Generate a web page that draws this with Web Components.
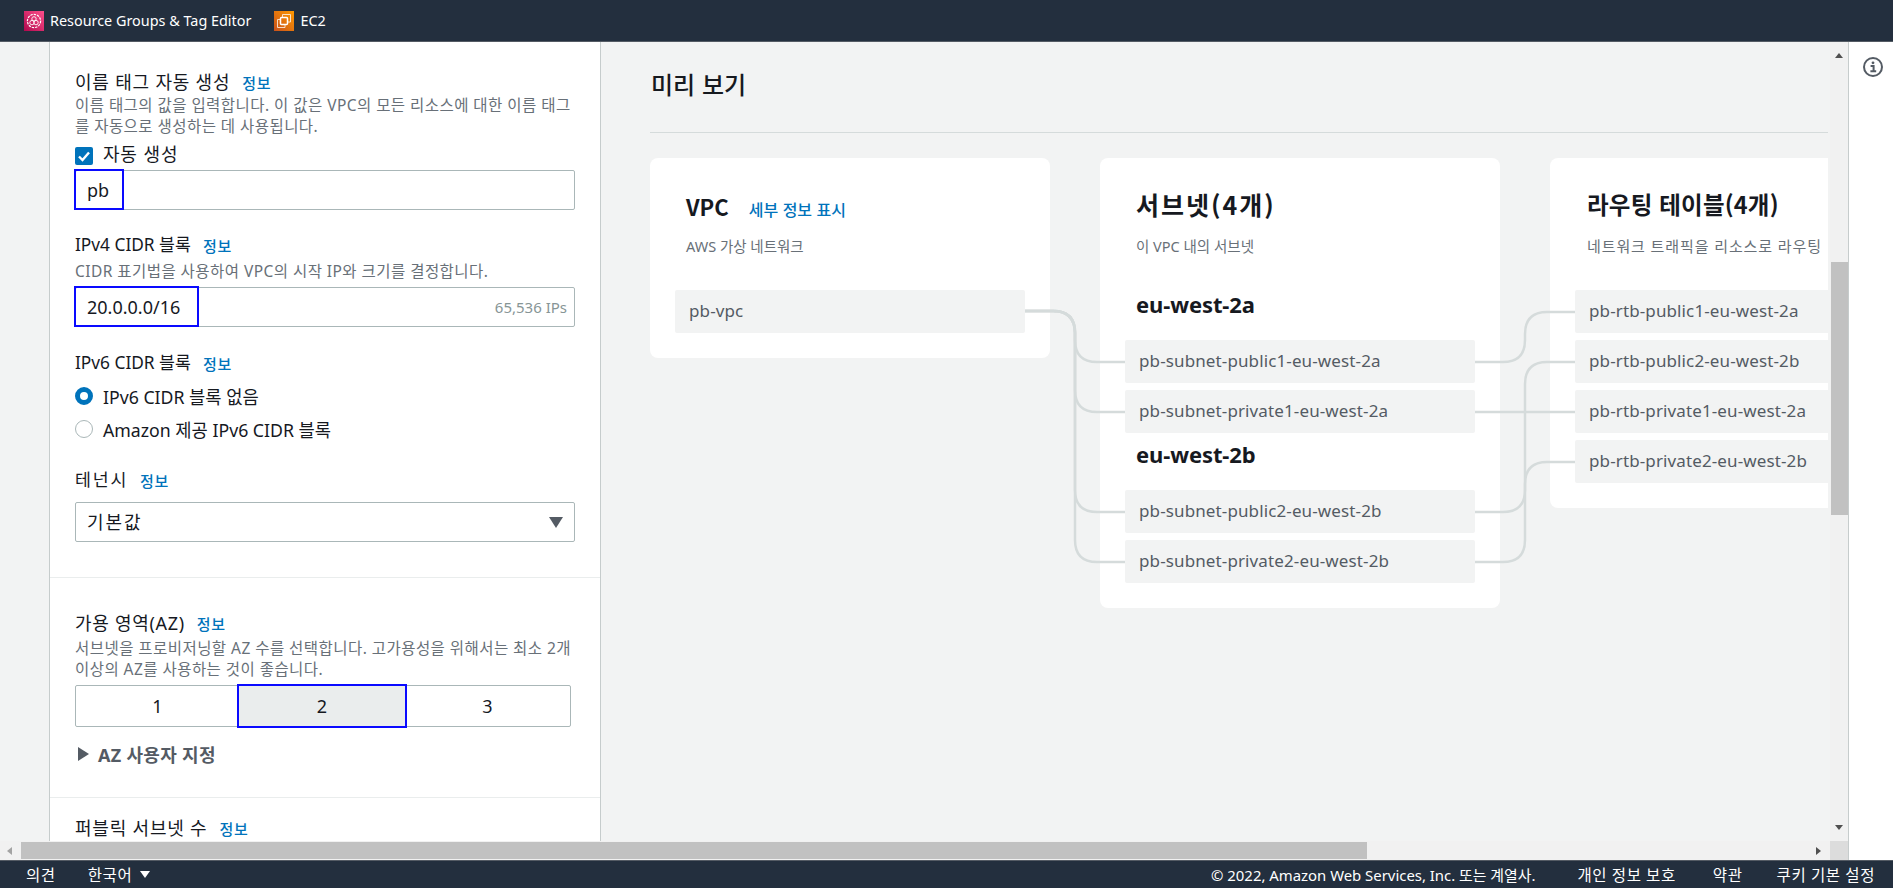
<!DOCTYPE html>
<html lang="ko">
<head>
<meta charset="utf-8">
<title>VPC 생성</title>
<style>
  html, body { margin: 0; height: 100%; overflow: hidden; }
  body {
    font-family: "Noto Sans", "Noto Sans CJK KR", sans-serif;
    font-size: 14px;
    color: #16191f;
    background: #f2f3f3;
  }
</style>
</head>
<body>
<vpc-page></vpc-page>

<script>
// small helper, every element below just fills its shadow root from a string
class Base extends HTMLElement {
  constructor() {
    super();
    this.attachShadow({ mode: 'open' });
    this.shadowRoot.innerHTML = this.markup();
  }
  markup() { return '<slot></slot>'; }
}

const KR = '"Noto Sans CJK KR", sans-serif';
const EN = '"Noto Sans", "Noto Sans CJK KR", sans-serif';

class TopBar extends Base {
  markup() { return `
    <style>
      :host { display: flex; align-items: center; height: 41px; background: #232f3e; border-bottom: 1px solid #545b64;
        padding-left: 24px; color: #fff; font: 14.4px ${EN}; }
      a { display: flex; align-items: center; gap: 6px; color: inherit; }
      a + a { margin-left: 23px; }
      svg { display: block; }
    </style>
    <a>
      <svg width="20" height="20" viewBox="0 0 20 20">
        <defs><linearGradient id="g1" x1="0" y1="1" x2="1" y2="0"><stop offset="0" stop-color="#b0084d"/><stop offset="1" stop-color="#ff4f8b"/></linearGradient></defs>
        <rect width="20" height="20" fill="url(#g1)"/>
        <g fill="none" stroke="#fff" stroke-width=".9">
          <circle cx="10" cy="10" r="6.6" stroke-width="1.2" stroke-dasharray="2.4 1"/>
          <circle cx="10" cy="7.9" r="2.2"/><circle cx="8" cy="11.6" r="2.2"/><circle cx="12" cy="11.6" r="2.2"/>
        </g>
      </svg>
      Resource Groups &amp; Tag Editor
    </a>
    <a>
      <svg width="20" height="20" viewBox="0 0 20 20">
        <defs><linearGradient id="g2" x1="0" y1="1" x2="1" y2="0"><stop offset="0" stop-color="#c8511b"/><stop offset="1" stop-color="#ff9900"/></linearGradient></defs>
        <rect width="20" height="20" fill="url(#g2)"/>
        <g fill="none" stroke="#fff" stroke-width=".9" opacity=".85">
          <path d="M8.5 6V3.5H16.5V11H14"/>
          <path d="M6 8.5H3.5V16.5H11V14"/>
        </g>
        <rect x="6.5" y="6.5" width="7" height="7" rx="1" fill="none" stroke="#fff" stroke-width="1.5"/>
      </svg>
      EC2
    </a>`; }
}

class FootBar extends Base {
  markup() { return `
    <style>
      :host { display: flex; align-items: center; height: 27px; background: #232f3e; border-top: 1px solid #545b64;
        color: #fff; font: 15px ${EN}; padding: 0 18px 0 26px; white-space: nowrap; }
      .k { font-size: 15.5px; letter-spacing: .6px; }
      .lang { margin-left: 32px; display: flex; align-items: center; gap: 8px; }
      .lang i { width: 0; height: 0; border: 5px solid transparent; border-top: 7px solid #fff; border-bottom: 0; }
      .copy { margin-left: auto; font-size: 14.9px; }
      .l1 { margin-left: 42px; } .l2 { margin-left: 37px; } .l3 { margin-left: 34px; }
    </style>
    <span class="k">의견</span>
    <span class="lang k">한국어 <i></i></span>
    <span class="copy">© 2022, Amazon Web Services, Inc. 또는 계열사.</span>
    <span class="l1 k">개인 정보 보호</span>
    <span class="l2 k">약관</span>
    <span class="l3 k">쿠키 기본 설정</span>`; }
}

class InfoLink extends Base {
  markup() { return `
    <style>
      :host { display: inline-block; color: #0073bb; font: 500 15px ${KR}; margin-left: 12px; letter-spacing: .7px; }
    </style>정보`; }
}

class FieldLabel extends Base {
  markup() { return `
    <style>
      :host { display: flex; align-items: center; height: 24px; font: var(--fs, 17.3px)/24px ${EN}; color: #16191f;
        letter-spacing: var(--ls, 0); white-space: nowrap; }
    </style><slot></slot>`; }
}

class FieldHint extends Base {
  markup() { return `
    <style>
      :host { display: block; font: 15.5px/21px ${EN}; color: #687078; letter-spacing: .45px; white-space: nowrap; }
    </style><slot></slot>`; }
}

// text box, the blue marker is an annotation laid on top of it
class TextBox extends Base {
  markup() { return `
    <style>
      :host { display: flex; align-items: center; position: relative; box-sizing: border-box; height: 40px; width: 500px;
        background: #fff; border: 1px solid #aab7b8; border-radius: 2px; padding: 0 7px 0 11px; font: 18px ${EN}; color: #16191f; }
      .mark { position: absolute; left: -2px; top: -2px; bottom: -1px; width: var(--mark, 0); border: 2px solid #0a0aff; box-sizing: border-box; display: var(--show, none); }
      .side { margin-left: auto; color: #879596; font-size: 15px; }
    </style>
    <slot></slot><span class="side"><slot name="side"></slot></span><span class="mark"></span>`; }
}

class SelectBox extends Base {
  markup() { return `
    <style>
      :host { display: flex; align-items: center; box-sizing: border-box; height: 40px; width: 500px; background: #fff;
        border: 1px solid #aab7b8; border-radius: 2px; padding: 0 11px 3px; font: 18px ${KR}; letter-spacing: 2px; color: #16191f; }
      i { margin-left: auto; margin-top: 3px; width: 0; height: 0; border: 7px solid transparent; border-top: 11px solid #545b64; border-bottom: 0; }
    </style><slot></slot><i></i>`; }
}

class CheckRow extends Base {
  markup() { return `
    <style>
      :host { display: flex; align-items: center; gap: 10px; height: 22px; font: 18px ${KR}; color: #16191f; letter-spacing: .8px; }
      svg { display: block; margin-top: 6px; }
    </style>
    <svg width="18" height="18" viewBox="0 0 18 18"><rect width="18" height="18" rx="2" fill="#0073bb"/><path d="M4 9.5l3.5 3.5L14 5.5" fill="none" stroke="#fff" stroke-width="2.4"/></svg>
    <slot></slot>`; }
}

class RadioRow extends Base {
  markup() { return `
    <style>
      :host { display: flex; align-items: center; gap: 10px; height: 24px; font: 17.7px ${EN}; color: #16191f; white-space: nowrap; }
      b { box-sizing: border-box; width: 18px; height: 18px; border-radius: 50%; border: 1.5px solid #aab7b8; background: #fff; }
      :host([on]) b { border: 5px solid #0073bb; }
    </style><b></b><slot></slot>`; }
}

class AzPicker extends Base {
  markup() { return `
    <style>
      :host { display: grid; grid-template-columns: 163px 166px 1fr; box-sizing: border-box; width: 496px; height: 42px; background: #fff;
        border: 1px solid #aab7b8; border-radius: 2px; font: 18px ${EN}; color: #16191f; }
      span { display: flex; align-items: center; justify-content: center; position: relative; }
      .on { background: #eaeded; outline: 2px solid #0a0aff; outline-offset: 0; }
    </style>
    <span>1</span><span class="on">2</span><span>3</span>`; }
}

class FormPanel extends Base {
  markup() { return `
    <style>
      :host { display: block; box-sizing: border-box; width: 552px; margin-left: 49px; flex: none; background: #fff;
        border-left: 1px solid #c6cccc; border-right: 1px solid #c6cccc; overflow: hidden; }
      .sec { box-sizing: border-box; padding: 28px 25px 0; }
      .sec + .sec { border-top: 1px solid #eaeded; }
      .tri { display: inline-block; width: 0; height: 0; border: 7px solid transparent; border-left: 11px solid #545b64; border-right: 0; margin: 0 9px 0 3px; }
      .exp { display: flex; align-items: center; font: 700 18px ${EN}; letter-spacing: .3px; color: #545b64; height: 24px; margin-top: 16px; }
    </style>
    <div class="sec" style="height:535px">
      <field-label style="--fs:18px; --ls:.8px">이름 태그 자동 생성<info-link></info-link></field-label>
      <field-hint style="margin-top:1px">이름 태그의 값을 입력합니다. 이 값은 VPC의 모든 리소스에 대한 이름 태그<br>를 자동으로 생성하는 데 사용됩니다.</field-hint>
      <check-row style="margin-top:5px">자동 생성</check-row>
      <text-box style="--mark:50px; --show:block; margin-top:6px">pb</text-box>

      <field-label style="margin-top:23px">IPv4 CIDR 블록<info-link></info-link></field-label>
      <field-hint style="margin-top:4px">CIDR 표기법을 사용하여 VPC의 시작 IP와 크기를 결정합니다.</field-hint>
      <text-box style="--mark:125px; --show:block; margin-top:5px">20.0.0.0/16<span slot="side">65,536 IPs</span></text-box>

      <field-label style="margin-top:24px">IPv6 CIDR 블록<info-link></info-link></field-label>
      <radio-row on style="margin-top:9px">IPv6 CIDR 블록 없음</radio-row>
      <radio-row style="margin-top:9px">Amazon 제공 IPv6 CIDR 블록</radio-row>

      <field-label style="margin-top:27px; --ls:1.8px">테넌시<info-link></info-link></field-label>
      <select-box style="margin-top:10px">기본값</select-box>
    </div>
    <div class="sec" style="height:220px; padding-top:33px">
      <field-label style="--fs:18px; --ls:.7px">가용 영역(AZ)<info-link></info-link></field-label>
      <field-hint style="margin-top:3px">서브넷을 프로비저닝할 AZ 수를 선택합니다. 고가용성을 위해서는 최소 2개<br>이상의 AZ를 사용하는 것이 좋습니다.</field-hint>
      <az-picker style="margin-top:5px"></az-picker>
      <div class="exp" style="margin-top:15px"><span class="tri"></span>AZ 사용자 지정</div>
    </div>
    <div class="sec" style="padding-top:18px">
      <field-label style="--fs:18px; --ls:.8px">퍼블릭 서브넷 수<info-link></info-link></field-label>
    </div>`; }
}

class ResRow extends Base {
  markup() { return `
    <style>
      :host { display: flex; align-items: center; box-sizing: border-box; width: 350px; height: 43px; background: #f2f3f3;
        border-radius: 2px; padding: 0 14px 2px; font: 17px ${EN}; color: #545b64; white-space: nowrap; letter-spacing: .12px; }
    </style><slot></slot>`; }
}

class PreviewCard extends Base {
  markup() { return `
    <style>
      :host { display: block; box-sizing: border-box; flex: none; width: 400px; background: #fff; border-radius: 8px; padding: 30px 25px 25px; }
      .t { display: flex; align-items: center; height: 32px; padding-left: 11px; font: 700 23.5px ${KR}; color: #16191f; white-space: nowrap; }
      .d { height: 22px; margin-top: 15px; padding-left: 11px; font: 14.5px/22px ${EN}; color: #687078; white-space: nowrap; }
      .body { margin-top: 33px; }
    </style>
    <div class="t"><slot name="title"></slot></div>
    <div class="d"><slot name="desc"></slot></div>
    <div class="body"><slot></slot></div>`; }
}

class AzHead extends Base {
  markup() { return `
    <style>
      :host { display: block; padding-left: 11px; font: 700 22px/28px ${EN}; color: #16191f; letter-spacing: -.1px; }
    </style><slot></slot>`; }
}

// lines between the cards, a free diagram so it is placed over the row of cards
class LinkLines extends Base {
  markup() {
    const r = 22;
    const left = [362, 412, 512, 562].map(y =>
      `M1025 311H${1075 - r}Q1075 311 1075 ${311 + r}V${y - r}Q1075 ${y} ${1075 + r} ${y}H1125`);
    const right = [[362, 312], [412, 412], [512, 362], [562, 462]].map(([a, b]) => {
      if (a === b) return `M1475 ${a}H1575`;
      return `M1475 ${a}H${1525 - r}Q1525 ${a} 1525 ${a - r}V${b + r}Q1525 ${b} ${1525 + r} ${b}H1575`;
    });
    return `
    <style>
      :host { position: absolute; left: 0; top: -133px; display: block; pointer-events: none; }
      svg { display: block; }
      path { fill: none; stroke: #d5dbdb; stroke-width: 2.5; }
    </style>
    <svg width="1248" height="620" viewBox="650 0 1248 620">
      ${left.concat(right).map(d => `<path d="${d}"/>`).join('')}
    </svg>`;
  }
}

class PreviewPane extends Base {
  markup() { return `
    <style>
      :host { display: block; flex: 1; min-width: 0; box-sizing: border-box; padding-left: 49px; padding-right: 2px; overflow: hidden; }
      h2 { margin: 0; height: 91px; box-sizing: border-box; font: 500 24px/84px ${KR}; color: #16191f; border-bottom: 1px solid #d5dbdb; padding-left: 1px; }
      .stage { position: relative; display: flex; align-items: flex-start; gap: 50px; padding-top: 25px; overflow: hidden; }
      .sp { display: flex; flex-direction: column; gap: 7px; }
      .cta { margin-left: 20px; color: #0073bb; font: 500 16px ${KR}; }
      .v { font-size: 22px; padding-top: 3px; }
      .s { font-size: 25px; letter-spacing: 2px; }
      .r { letter-spacing: .2px; padding-left: 1px; }
      .wide { letter-spacing: .9px; font-size: 15px; padding-left: 1px; }
      .m { margin-bottom: 15px; }
    </style>
    <h2>미리 보기</h2>
    <div class="stage">
      <preview-card style="height:200px">
        <span slot="title" class="v">VPC<span class="cta">세부 정보 표시</span></span>
        <span slot="desc">AWS 가상 네트워크</span>
        <res-row>pb-vpc</res-row>
      </preview-card>
      <preview-card style="height:450px">
        <span slot="title" class="s">서브넷(4개)</span>
        <span slot="desc">이 VPC 내의 서브넷</span>
        <div class="sp">
          <az-head class="m">eu-west-2a</az-head>
          <res-row>pb-subnet-public1-eu-west-2a</res-row>
          <res-row>pb-subnet-private1-eu-west-2a</res-row>
          <az-head class="m">eu-west-2b</az-head>
          <res-row>pb-subnet-public2-eu-west-2b</res-row>
          <res-row>pb-subnet-private2-eu-west-2b</res-row>
        </div>
      </preview-card>
      <preview-card style="height:350px">
        <span slot="title" class="r">라우팅 테이블(4개)</span>
        <span slot="desc" class="wide">네트워크 트래픽을 리소스로 라우팅</span>
        <div class="sp">
          <res-row>pb-rtb-public1-eu-west-2a</res-row>
          <res-row>pb-rtb-public2-eu-west-2b</res-row>
          <res-row>pb-rtb-private1-eu-west-2a</res-row>
          <res-row>pb-rtb-private2-eu-west-2b</res-row>
        </div>
      </preview-card>
      <link-lines></link-lines>
    </div>`; }
}

class VScroll extends Base {
  markup() { return `
    <style>
      :host { display: flex; flex-direction: column; align-items: center; flex: none; width: 18px; background: #f1f1f1; }
      .u, .d { width: 0; height: 0; border: 4.5px solid transparent; flex: none; }
      .u { border-top: 0; border-bottom: 5px solid #505050; margin-top: 11px; }
      .d { border-bottom: 0; border-top: 5px solid #505050; margin-bottom: 11px; }
      .thumb { width: 17px; height: 253px; background: #c1c1c1; margin-top: 204px; margin-bottom: auto; }
    </style><i class="u"></i><div class="thumb"></div><i class="d"></i>`; }
}

class HScroll extends Base {
  markup() { return `
    <style>
      :host { display: flex; align-items: center; flex: none; height: 19px; background: #f1f1f1; }
      .l, .r { width: 0; height: 0; border: 4.5px solid transparent; flex: none; }
      .l { border-left: 0; border-right: 5px solid #a3a3a3; margin-left: 7px; }
      .r { border-right: 0; border-left: 5px solid #505050; margin-left: auto; margin-right: 9px; }
      .thumb { width: 1346px; height: 17px; background: #c1c1c1; margin-left: 9px; }
      .corner { width: 18px; height: 19px; background: #dcdcdc; flex: none; }
    </style><i class="l"></i><div class="thumb"></div><i class="r"></i><div class="corner"></div>`; }
}

class ToolsRail extends Base {
  markup() { return `
    <style>
      :host { display: flex; justify-content: center; flex: none; box-sizing: border-box; width: 45px; padding: 15px 0 0 4px; background: #fff; border-left: 1px solid #c6cccc; }
      svg { display: block; }
    </style>
    <svg width="20" height="20" viewBox="0 0 20 20" fill="none" stroke="#545b64">
      <circle cx="10" cy="10" r="9" stroke-width="2"/>
      <path d="M7.6 9H10.6V13.8M7.4 14.2H13.2" stroke-width="2"/>
      <circle cx="10" cy="5.8" r="1.4" fill="#545b64" stroke="none"/>
    </svg>`; }
}

class VpcPage extends Base {
  markup() { return `
    <style>
      :host { display: flex; flex-direction: column; height: 888px; width: 1893px; }
      .main { display: flex; flex: 1; min-height: 0; }
      .work { display: flex; flex-direction: column; flex: 1; min-width: 0; }
      .row { display: flex; flex: 1; min-height: 0; }
    </style>
    <top-bar></top-bar>
    <div class="main">
      <div class="work">
        <div class="row">
          <form-panel></form-panel>
          <preview-pane></preview-pane>
          <v-scroll></v-scroll>
        </div>
        <h-scroll></h-scroll>
      </div>
      <tools-rail></tools-rail>
    </div>
    <foot-bar></foot-bar>`; }
}

customElements.define('top-bar', TopBar);
customElements.define('foot-bar', FootBar);
customElements.define('info-link', InfoLink);
customElements.define('field-label', FieldLabel);
customElements.define('field-hint', FieldHint);
customElements.define('text-box', TextBox);
customElements.define('select-box', SelectBox);
customElements.define('check-row', CheckRow);
customElements.define('radio-row', RadioRow);
customElements.define('az-picker', AzPicker);
customElements.define('form-panel', FormPanel);
customElements.define('res-row', ResRow);
customElements.define('preview-card', PreviewCard);
customElements.define('az-head', AzHead);
customElements.define('link-lines', LinkLines);
customElements.define('preview-pane', PreviewPane);
customElements.define('v-scroll', VScroll);
customElements.define('h-scroll', HScroll);
customElements.define('tools-rail', ToolsRail);
customElements.define('vpc-page', VpcPage);
</script>
</body>
</html>
